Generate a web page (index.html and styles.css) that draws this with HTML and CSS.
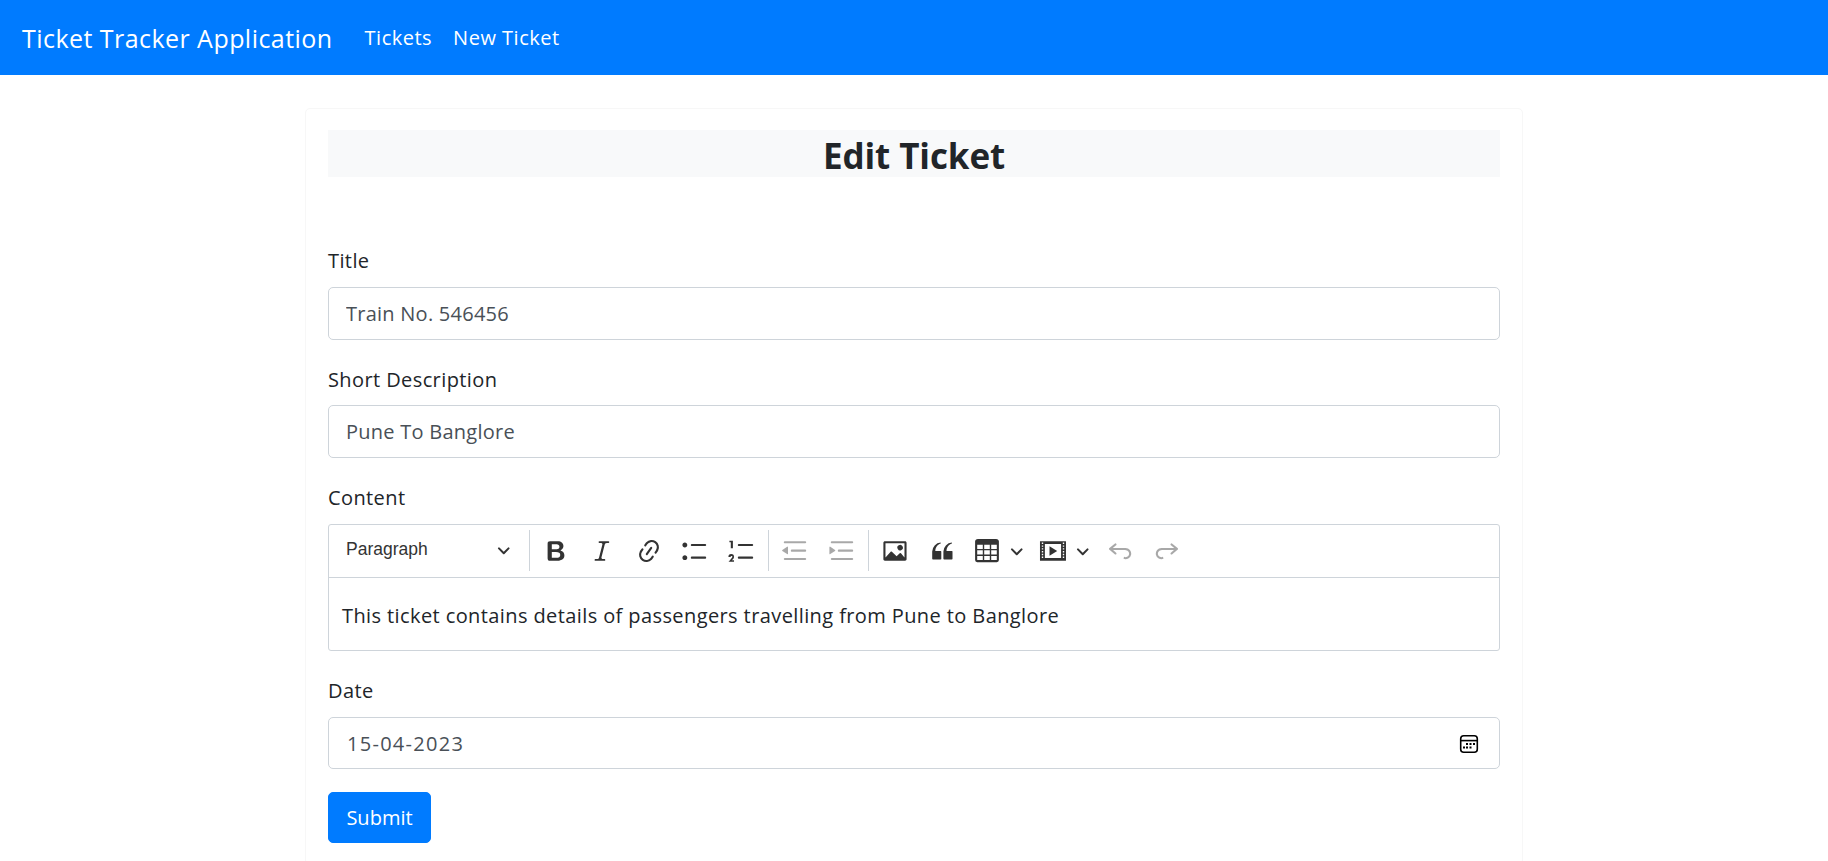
FILE: index.html
```html
<!DOCTYPE html>
<html lang="en">
<head>
  <meta charset="UTF-8" />
  <title>Ticket Tracker Application</title>
  <link rel="stylesheet" href="styles.css">
</head>
<body>
  <nav class="navbar">
    <a class="brand" href="#">Ticket Tracker Application</a>
    <a class="nav-link" href="#">Tickets</a>
    <a class="nav-link" href="#">New Ticket</a>
  </nav>

  <div class="card">
    <h3 class="card-title">Edit Ticket</h3>
    <form class="ticket-form">
      <div class="form-group">
        <label for="title">Title</label>
        <input type="text" id="title" class="form-control" value="Train No. 546456" />
      </div>
      <div class="form-group">
        <label for="shortDesc">Short Description</label>
        <input type="text" id="shortDesc" class="form-control" value="Pune To Banglore" />
      </div>
      <div class="form-group">
        <label>Content</label>
        <div class="editor">
          <div class="toolbar">
            <button type="button" class="heading-drop">
              <span>Paragraph</span>
              <svg class="arrow" viewBox="0 0 10 10"><path d="M.941 4.523a.75.75 0 1 1 1.06-1.06l3.006 3.005 3.005-3.005a.75.75 0 1 1 1.06 1.06l-3.549 3.55a.75.75 0 0 1-1.06 0L.941 4.523z"/></svg>
            </button>
            <span class="sep"></span>
            <button type="button" class="tool"><svg viewBox="0 0 20 20"><path d="M10.187 17H5.773c-.637 0-1.092-.138-1.364-.415-.273-.277-.409-.718-.409-1.323V4.738c0-.617.14-1.062.419-1.332.279-.27.73-.406 1.354-.406h4.68c.69 0 1.288.041 1.793.124.506.083.96.242 1.36.478.341.197.644.447.906.75a3.262 3.262 0 0 1 .808 2.162c0 1.401-.722 2.426-2.167 3.075C15.05 10.175 16 11.315 16 13.01a3.756 3.756 0 0 1-2.296 3.504 6.1 6.1 0 0 1-1.517.377c-.571.073-1.238.11-2 .11zm-.217-6.217H7v4.087h3.069c1.977 0 2.965-.69 2.965-2.072 0-.707-.256-1.22-.768-1.537-.512-.319-1.277-.478-2.296-.478zM7 5.13v3.619h2.606c.729 0 1.292-.067 1.69-.2a1.6 1.6 0 0 0 .91-.765c.165-.267.247-.566.247-.897 0-.707-.26-1.176-.778-1.409-.519-.232-1.31-.348-2.375-.348H7z"/></svg></button>
            <button type="button" class="tool"><svg viewBox="0 0 20 20"><path d="m9.586 14.633.021.004c-.036.335.095.655.393.962.082.083.173.15.274.201h1.474a.6.6 0 1 1 0 1.2H5.304a.6.6 0 0 1 0-1.2h1.15c.474-.07.809-.182 1.005-.334.157-.122.291-.32.404-.597l2.416-9.55a1.053 1.053 0 0 0-.281-.823 1.12 1.12 0 0 0-.442-.296H8.15a.6.6 0 0 1 0-1.2h6.443a.6.6 0 1 1 0 1.2h-1.195c-.376.056-.65.155-.823.296-.215.175-.423.439-.623.79l-2.366 9.347z"/></svg></button>
            <button type="button" class="tool"><svg viewBox="0 0 20 20"><path d="m11.077 15 .991-1.416a.75.75 0 1 1 1.229.86l-1.148 1.64a.748.748 0 0 1-.217.206 5.251 5.251 0 0 1-8.503-5.955.741.741 0 0 1 .12-.274l1.147-1.639a.75.75 0 1 1 1.228.86L4.933 10.7l.006.003a3.75 3.75 0 0 0 6.132 4.294l.006.004zm5.494-5.335a.748.748 0 0 1-.12.274l-1.147 1.639a.75.75 0 1 1-1.228-.86l.86-1.23a3.75 3.75 0 0 0-6.144-4.301l-.86 1.229a.75.75 0 0 1-1.229-.86l1.148-1.64a.748.748 0 0 1 .217-.206 5.251 5.251 0 0 1 8.503 5.955zm-4.563-2.532a.75.75 0 0 1 .184 1.045l-3.155 4.505a.75.75 0 1 1-1.229-.86l3.155-4.506a.75.75 0 0 1 1.045-.184z"/></svg></button>
            <button type="button" class="tool"><svg viewBox="0 0 20 20"><path d="M7 5.75c0 .414.336.75.75.75h9.5a.75.75 0 1 0 0-1.5h-9.5a.75.75 0 0 0-.75.75zm-6 0C1 4.784 1.777 4 2.75 4c.966 0 1.75.777 1.75 1.75 0 .966-.777 1.75-1.75 1.75C1.784 7.5 1 6.723 1 5.75zm6 9c0 .414.336.75.75.75h9.5a.75.75 0 1 0 0-1.5h-9.5a.75.75 0 0 0-.75.75zm-6 0c0-.966.777-1.75 1.75-1.75.966 0 1.75.777 1.75 1.75 0 .966-.777 1.75-1.75 1.75-.966 0-1.75-.777-1.75-1.75z"/></svg></button>
            <button type="button" class="tool"><svg viewBox="0 0 20 20"><path d="M7 5.75c0 .414.336.75.75.75h9.5a.75.75 0 1 0 0-1.5h-9.5a.75.75 0 0 0-.75.75zM3.5 3v5H2V3.7H1v-1h2.5V3zM.343 17.857l2.59-3.257a.6.6 0 1 0-1.04-.3H.302a2 2 0 1 1 3.995 0c-.048.405-.16.734-.333.988-.175.254-.59.692-1.244 1.312H4.3v1h-4l.043-.743zM7 14.75a.75.75 0 0 1 .75-.75h9.5a.75.75 0 1 1 0 1.5h-9.5a.75.75 0 0 1-.75-.75z"/></svg></button>
            <span class="sep"></span>
            <button type="button" class="tool disabled"><svg viewBox="0 0 20 20"><path d="M2 3.75c0 .414.336.75.75.75h14.5a.75.75 0 1 0 0-1.5H2.75a.75.75 0 0 0-.75.75zm5 6c0 .414.336.75.75.75h9.5a.75.75 0 1 0 0-1.5h-9.5a.75.75 0 0 0-.75.75zM2.75 16.5h14.5a.75.75 0 1 0 0-1.5H2.75a.75.75 0 1 0 0 1.5zm1.618-9.55L.98 9.358a.4.4 0 0 0 .013.661l3.39 2.207A.4.4 0 0 0 5 11.892V7.275a.4.4 0 0 0-.632-.326z"/></svg></button>
            <button type="button" class="tool disabled"><svg viewBox="0 0 20 20"><path d="M2 3.75c0 .414.336.75.75.75h14.5a.75.75 0 1 0 0-1.5H2.75a.75.75 0 0 0-.75.75zm5 6c0 .414.336.75.75.75h9.5a.75.75 0 1 0 0-1.5h-9.5a.75.75 0 0 0-.75.75zM2.75 16.5h14.5a.75.75 0 1 0 0-1.5H2.75a.75.75 0 1 0 0 1.5zM1.632 6.95 5.02 9.358a.4.4 0 0 1-.013.661l-3.39 2.207A.4.4 0 0 1 1 11.892V7.275a.4.4 0 0 1 .632-.326z"/></svg></button>
            <span class="sep"></span>
            <button type="button" class="tool"><svg viewBox="0 0 20 20"><path d="M6.91 10.54c.26-.23.64-.21.88.03l3.36 3.14 2.23-2.06a.64.64 0 0 1 .87 0l2.52 2.97V4.5H3.2v10.12l3.71-4.08zm10.27-7.51c.6 0 1.09.47 1.09 1.05v11.84c0 .59-.49 1.06-1.09 1.06H2.79c-.6 0-1.09-.47-1.09-1.06V4.08c0-.58.49-1.05 1.1-1.05h14.38zm-5.22 5.56a1.96 1.96 0 1 1 3.4-1.96 1.96 1.96 0 0 1-3.4 1.96z"/></svg></button>
            <button type="button" class="tool"><svg viewBox="0 0 20 20"><path d="M3 10.423a6.5 6.5 0 0 1 6.056-6.408l.038.67C6.448 5.423 5.354 7.663 5.22 10H9c.552 0 .5.432.5.986v4.511c0 .554-.448.503-1 .503h-5c-.552 0-.5-.449-.5-1.003v-4.574zm8 0a6.5 6.5 0 0 1 6.056-6.408l.038.67c-2.646.739-3.74 2.979-3.873 5.315H17c.552 0 .5.432.5.986v4.511c0 .554-.448.503-1 .503h-5c-.552 0-.5-.449-.5-1.003v-4.574z"/></svg></button>
            <button type="button" class="tool tool-drop"><svg viewBox="0 0 20 20"><path d="M3 5.5v3h4v-3H3zm0 4v3h4v-3H3zm0 4v3h4v-3H3zm5 3h4v-3H8v3zm5 0h4v-3h-4v3zm4-4v-3h-4v3h4zm0-4v-3h-4v3h4zm1.5 8A1.5 1.5 0 0 1 17 18H3a1.5 1.5 0 0 1-1.5-1.5V3c.222-.863 1.068-1.5 2-1.5h13c.932 0 1.778.637 2 1.5v13.5zM12 8.5v-3H8v3h4zm0 4v-3H8v3h4z"/></svg><svg class="arrow" viewBox="0 0 10 10"><path d="M.941 4.523a.75.75 0 1 1 1.06-1.06l3.006 3.005 3.005-3.005a.75.75 0 1 1 1.06 1.06l-3.549 3.55a.75.75 0 0 1-1.06 0L.941 4.523z"/></svg></button>
            <button type="button" class="tool tool-drop"><svg viewBox="0 0 20 20"><path fill-rule="evenodd" d="M18.68 3.03c.6 0 .59-.03.59.55v12.84c0 .59.01.56-.59.56H1.29c-.6 0-.59.03-.59-.56V3.58c0-.58-.01-.55.6-.55h17.38zM15.77 15V5H4.2v10h11.57zM2 4v1h1V4H2zm0 2v1h1V6H2zm0 2v1h1V8H2zm0 2v1h1v-1H2zm0 2v1h1v-1H2zm0 2v1h1v-1H2zm15-10v1h1V4h-1zm0 2v1h1V6h-1zm0 2v1h1V8h-1zm0 2v1h1v-1h-1zm0 2v1h1v-1h-1zm0 2v1h1v-1h-1zM7.5 6.6 13 10l-5.5 3.4V6.6z"/></svg><svg class="arrow" viewBox="0 0 10 10"><path d="M.941 4.523a.75.75 0 1 1 1.06-1.06l3.006 3.005 3.005-3.005a.75.75 0 1 1 1.06 1.06l-3.549 3.55a.75.75 0 0 1-1.06 0L.941 4.523z"/></svg></button>
            <button type="button" class="tool disabled"><svg viewBox="0 0 20 20"><path d="m5.042 9.367 2.189 1.837a.75.75 0 0 1-.965 1.149l-3.788-3.18a.747.747 0 0 1-.21-.284.75.75 0 0 1 .17-.945L6.23 4.762a.75.75 0 1 1 .964 1.15L4.863 7.866h8.917A.75.75 0 0 1 14 7.9a4 4 0 1 1-1.477 7.718l.344-1.489a2.5 2.5 0 1 0 1.094-4.73l.008-.032H5.042z"/></svg></button>
            <button type="button" class="tool disabled"><svg viewBox="0 0 20 20"><path d="m14.958 9.367-2.189 1.837a.75.75 0 0 0 .965 1.149l3.788-3.18a.747.747 0 0 0 .21-.284.75.75 0 0 0-.17-.945L13.77 4.762a.75.75 0 1 0-.964 1.15l2.331 1.955H6.22A.75.75 0 0 0 6 7.9a4 4 0 1 0 1.477 7.718l-.344-1.489A2.5 2.5 0 1 1 6.039 9.4l-.008-.032h8.927z"/></svg></button>
          </div>
          <div class="editor-body">
            <p>This ticket contains details of passengers travelling from Pune to Banglore</p>
          </div>
        </div>
      </div>
      <div class="form-group date-group">
        <label for="date">Date</label>
        <div class="form-control date-field">
          <span id="date">15-04-2023</span>
          <svg class="calendar" viewBox="0 0 20 20"><rect x="1.7" y="1.7" width="16.6" height="16.6" rx="3" fill="none" stroke="#000" stroke-width="1.6"/><path d="M2 6.6h16" stroke="#000" stroke-width="1.6"/><path d="M7 9h2v2H7zM10.5 9h2v2h-2zM14 9h2v2h-2zM4 12.5h2v2H4zM7 12.5h2v2H7zM10.5 12.5h2v2h-2z"/></svg>
        </div>
      </div>
      <button type="submit" class="btn-submit">Submit</button>
    </form>
  </div>
</body>
</html>
```

FILE: styles.css
```css
* {
  box-sizing: border-box;
}

body {
  margin: 0;
  font-family: "Open Sans", Arial, sans-serif;
  font-size: 20px;
  line-height: 30px;
  letter-spacing: 0.4px;
  color: #212529;
  background-color: #fff;
}

.navbar {
  display: flex;
  align-items: center;
  height: 75px;
  padding: 0 20px;
  background-color: #007bff;
}

.brand {
  font-size: 25px;
  letter-spacing: 0.45px;
  color: #fff;
  text-decoration: none;
  margin: 0 21.5px 0 2px;
}

.nav-link {
  color: #fff;
  text-decoration: none;
  padding: 0 10.5px;
  letter-spacing: 0.5px;
}

.card {
  width: 1218px;
  margin: 33px 0 0 305px;
  padding: 21px 22px;
  border: 1px solid #f7f7f7;
  border-radius: 5px;
}

.card-title {
  margin: 0 0 69.25px;
  height: 47px;
  font-size: 35px;
  line-height: 52px;
  font-weight: 700;
  letter-spacing: -0.1px;
  text-align: center;
  background-color: #f8f9fa;
}

.form-group {
  margin-bottom: 25px;
}

.date-group {
  margin-bottom: 22.75px;
}

label {
  display: block;
  margin-bottom: 10.75px;
}

.form-control {
  display: block;
  width: 100%;
  height: 52.5px;
  padding: 0 17px;
  font-family: inherit;
  font-size: 20px;
  letter-spacing: 0.25px;
  color: #495057;
  border: 1px solid #ced4da;
  border-radius: 5px;
}

/* date text sits a touch lower than the other inputs */
.date-field {
  display: flex;
  align-items: center;
  justify-content: space-between;
  padding: 2px 20px 0 18px;
  letter-spacing: 1.28px;
}

.calendar {
  width: 20px;
  height: 20px;
}

.editor {
  border: 1px solid #ced4da;
  border-radius: 3px;
}

.toolbar {
  display: flex;
  align-items: center;
  height: 53px;
  border-bottom: 1px solid #ced4da;
}

.heading-drop {
  display: flex;
  align-items: center;
  justify-content: space-between;
  width: 196.5px;
  height: 40px;
  padding: 0 15px 2px 17px;
  font-family: "Liberation Sans", Arial, sans-serif;
  font-size: 17.5px;
  letter-spacing: 0;
  color: #333;
  background: none;
  border: none;
}

.tool {
  display: flex;
  align-items: center;
  justify-content: center;
  width: 46.5px;
  height: 40px;
  padding: 0;
  background: none;
  border: none;
}

.tool svg {
  width: 28px;
  height: 28px;
  fill: #333;
  flex-shrink: 0;
}

.tool.disabled svg {
  opacity: 0.42;
}

.tool-drop {
  justify-content: flex-start;
  width: 66px;
  padding-left: 8px;
  gap: 9.25px;
}

.arrow,
.tool svg.arrow {
  width: 13.5px;
  height: 13.5px;
  fill: #333;
}

.sep {
  width: 1px;
  height: 41px;
  margin: 0 3px;
  background-color: #ced4da;
}

.editor-body {
  height: 72.5px;
  padding: 23px 13px 0;
}

.editor-body p {
  margin: 0;
  line-height: 30px;
}

.btn-submit {
  display: block;
  width: 103px;
  height: 51px;
  font-family: inherit;
  font-size: 20px;
  color: #fff;
  background-color: #007bff;
  border: 1px solid #007bff;
  border-radius: 5px;
}
```
